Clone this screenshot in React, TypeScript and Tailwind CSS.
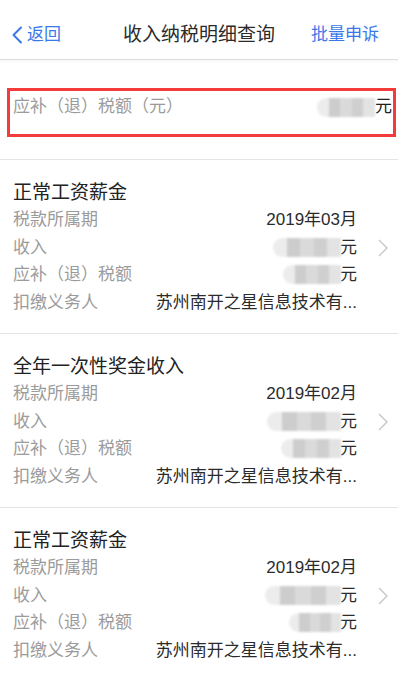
const FONT = "font-['Liberation_Sans','Noto_Sans_CJK_SC',sans-serif]";

interface Record {
  title: string;
  period: string;
  incomeMask: string;
  taxMask: string;
}

const RECORDS: Record[] = [
  { title: "正常工资薪金", period: "2019年03月", incomeMask: "w-[68px]", taxMask: "w-[58px]" },
  { title: "全年一次性奖金收入", period: "2019年02月", incomeMask: "w-[74px]", taxMask: "w-[60px]" },
  { title: "正常工资薪金", period: "2019年02月", incomeMask: "w-[76px]", taxMask: "w-[52px]" },
];

// blurred mosaic over hidden amounts
function Mask({ width }: { width: string }) {
  return (
    <div className={`${width} h-[19px] flex overflow-hidden rounded-l-full blur-[1px]`}>
      <div className="flex-1 bg-[#ececec]" />
      <div className="flex-1 bg-[#cdcdcd]" />
      <div className="flex-1 bg-[#dadada]" />
      <div className="flex-1 bg-[#cfcfcf]" />
      <div className="flex-1 bg-[#e3e3e3]" />
    </div>
  );
}

function Row({ label, children }: { label: string; children: React.ReactNode }) {
  return (
    <div className="flex items-center justify-between h-[27.5px]">
      <span className="text-[17px] text-[#9b9b9b] whitespace-nowrap">{label}</span>
      <div className="flex items-center text-[17px] text-[#2b2b2b] whitespace-nowrap">{children}</div>
    </div>
  );
}

function RecordCard({ item }: { item: Record }) {
  return (
    <div className="flex items-center pl-[13px] pr-[10px] pt-[20px] pb-[17px] border-b border-[#e4e4e4]">
      <div className="flex-1">
        <div className="text-[19px] leading-[26px] text-[#222]">{item.title}</div>
        <Row label="税款所属期">{item.period}</Row>
        <Row label="收入">
          <Mask width={item.incomeMask} />
          <span className="-ml-[1px]">元</span>
        </Row>
        <Row label="应补（退）税额">
          <Mask width={item.taxMask} />
          <span className="-ml-[1px]">元</span>
        </Row>
        <Row label="扣缴义务人">
          <span>苏州南开之星信息技术有...</span>
        </Row>
      </div>
      <svg className="ml-[21px] w-[10px] h-[18px]" viewBox="0 0 10 18" fill="none">
        <polyline points="1,1 9,9 1,17" stroke="#c4c4c8" strokeWidth="1.3" />
      </svg>
    </div>
  );
}

export default function App() {
  return (
    <div className={`${FONT} w-[398px] min-h-[681px] bg-white`}>
      {/* Header */}
      <div className="relative flex items-center justify-between h-[60px] pt-[11px] pl-[11px] pr-[19px] border-b border-[#dcdce2] shadow-[0_2px_3px_rgba(0,0,0,0.03)]">
        <div className="flex items-center text-[#3a78ea] text-[17px]">
          <svg className="w-[12px] h-[18px]" viewBox="0 0 12 18" fill="none">
            <polyline points="10,1.5 2.5,9 10,16.5" stroke="#3a78ea" strokeWidth="2" strokeLinecap="round" strokeLinejoin="round" />
          </svg>
          <span className="ml-[4px]">返回</span>
        </div>
        <span className="absolute left-1/2 -translate-x-1/2 text-[19px] text-[#2a2a2a]">收入纳税明细查询</span>
        <span className="text-[#3a78ea] text-[17px]">批量申诉</span>
      </div>

      {/* Summary */}
      <div className="pt-[28px] pb-[22px] pl-[7px] pr-[2px] border-b border-[#e4e4e4]">
        <div className="flex items-start justify-between h-[49px] border-[3px] border-[#f43b3b] pl-[3px] pr-[1px] pt-[6px]">
          <span className="text-[17px] leading-[20px] text-[#9b9b9b]">应补（退）税额（元）</span>
          <div className="flex items-center text-[17px] leading-[20px] text-[#222]">
            <Mask width="w-[58px]" />
            <span>元</span>
          </div>
        </div>
      </div>

      {RECORDS.map((r, i) => (
        <RecordCard key={i} item={r} />
      ))}
    </div>
  );
}
